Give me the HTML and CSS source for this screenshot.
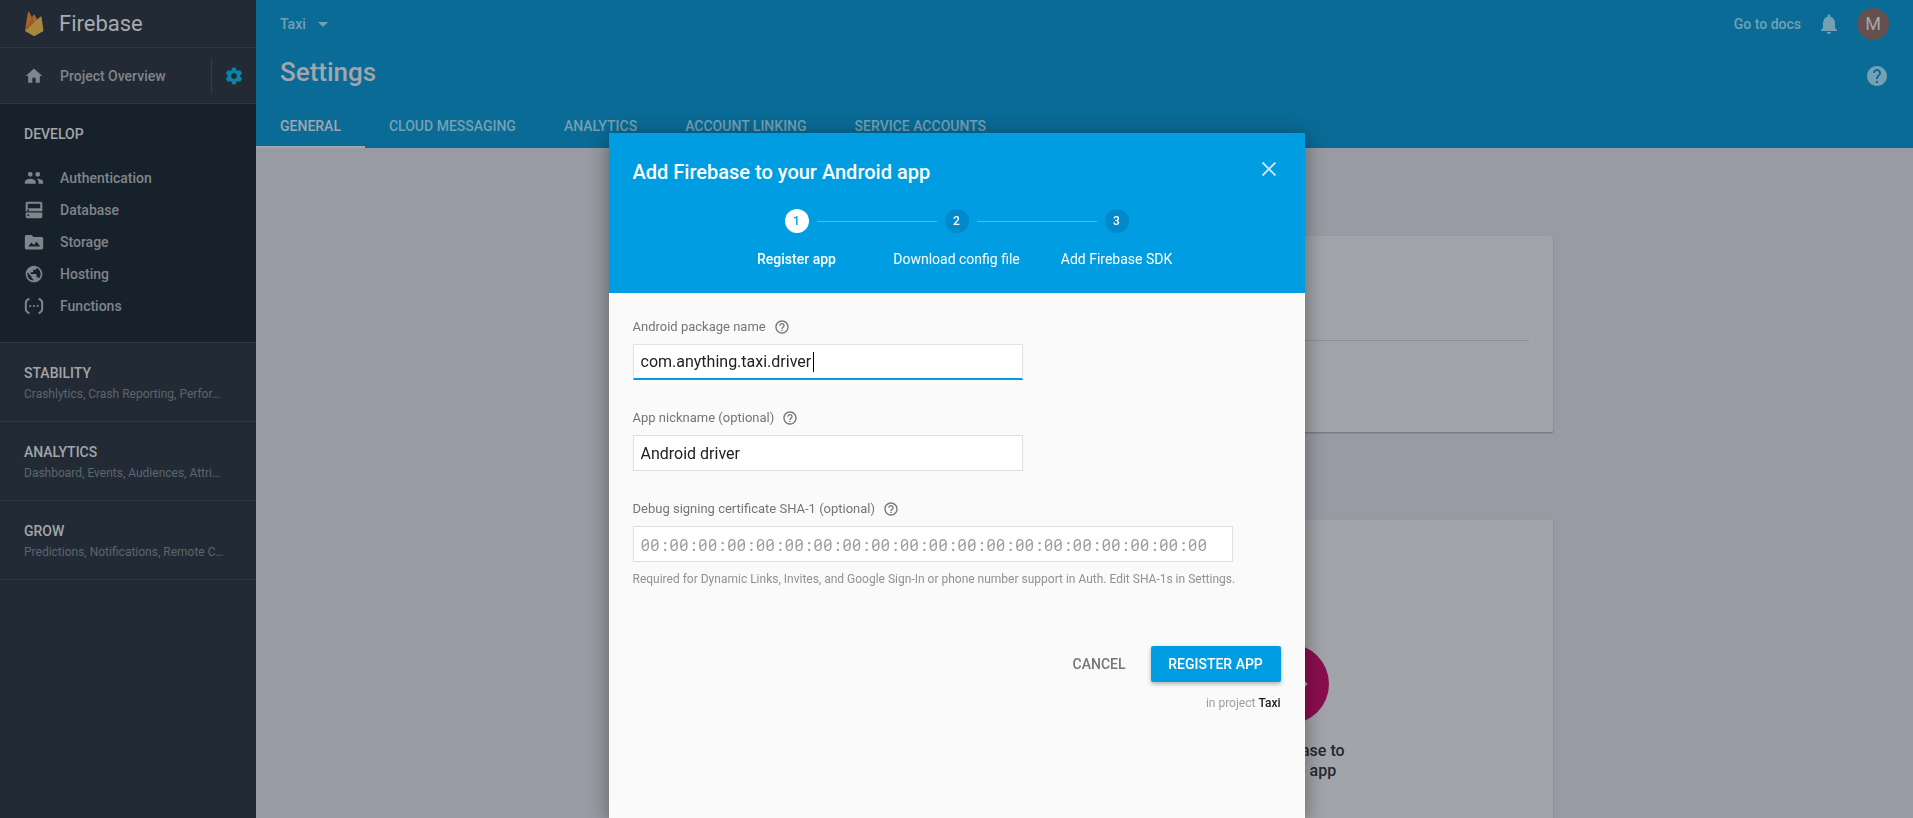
FILE: index.html
```html
<!DOCTYPE html>
<html lang="en">
<head>
<meta charset="utf-8">
<title>Settings – Taxi – Firebase console</title>
<link rel="stylesheet" href="styles.css">
</head>
<body>
<div class="console">
  <nav class="sidebar" aria-label="Console">
    <a class="brand" href="#">
      <svg class="brand-logo" width="20" height="28" viewBox="0 0 20 28" aria-hidden="true">
        <path fill="#a8672a" d="M1 21 4 2Q4.400 1 5.200 2L8 7.500 9.600 4.800Q10.200 4 10.800 5L19 21Z"/>
        <path fill="#9d5529" d="M1 21 8.100 7.500 11 12.600Z"/>
        <path fill="#a8873f" d="M1 21 16.500 6.600Q17.300 6 17.500 7L19.500 21 11.200 25.800Q10.200 26.300 9.200 25.800Z"/>
      </svg>
      <span class="brand-name">Firebase</span>
    </a>
    <div class="overview">
      <a class="nav-item overview-link" href="#">
        <svg class="icon" viewBox="0 0 24 24" aria-hidden="true"><path d="M10 20v-6h4v6h5v-8h3L12 3 2 12h3v8z"/></svg>
        <span>Project Overview</span>
      </a>
      <button class="gear" type="button" aria-label="Project settings">
        <svg class="icon" viewBox="0 0 24 24" aria-hidden="true"><path d="M19.430 12.980c.04-.32.07-.64.07-.98s-.03-.66-.07-.98l2.110-1.650c.19-.15.24-.42.12-.64l-2-3.460c-.12-.22-.39-.3-.61-.22l-2.490 1c-.52-.4-1.080-.73-1.690-.98l-.38-2.650C14.460 2.180 14.250 2 14 2h-4c-.25 0-.46.18-.49.42l-.38 2.650c-.61.25-1.170.59-1.690.98l-2.490-1c-.23-.09-.49 0-.61.22l-2 3.460c-.13.22-.07.49.12.64l2.110 1.650c-.04.32-.07.65-.07.98s.03.66.07.98l-2.110 1.650c-.19.15-.24.42-.12.64l2 3.460c.12.22.39.3.61.22l2.490-1c.52.4 1.080.73 1.690.98l.38 2.650c.03.24.24.42.49.42h4c.25 0 .46-.18.49-.42l.38-2.650c.61-.25 1.170-.59 1.690-.98l2.490 1c.23.09.49 0 .61-.22l2-3.460c.12-.22.07-.49-.12-.64l-2.110-1.650zM12 15.500c-1.930 0-3.500-1.570-3.500-3.500s1.570-3.500 3.500-3.500 3.500 1.570 3.500 3.500-1.570 3.500-3.500 3.500z"/></svg>
      </button>
    </div>
    <section class="develop">
      <h2 class="group-title">DEVELOP</h2>
      <ul class="nav-list">
        <li><a class="nav-item" href="#"><svg class="icon" viewBox="0 0 24 24" aria-hidden="true"><path d="M16.500 10.500a2.900 2.900 0 1 0 0-5.800 2.900 2.900 0 0 0 0 5.800zM7.500 10.500a2.900 2.900 0 1 0 0-5.800 2.900 2.900 0 0 0 0 5.800zM7.500 13C5.200 13 1 14.200 1 16.500V19h13v-2.500C14 14.200 9.800 13 7.500 13zM16.500 13c-.3 0-.6 0-1 .1 1.200.8 2 2 2 3.400V19H23v-2.500c0-2.300-4.200-3.500-6.500-3.500z"/></svg><span>Authentication</span></a></li>
        <li><a class="nav-item" href="#"><svg class="icon" viewBox="0 0 24 24" aria-hidden="true"><path fill-rule="evenodd" d="M4 2h16a2 2 0 0 1 2 2v9.500H2V4a2 2 0 0 1 2-2zm.5 2.500V10h15V4.500zM5 10.800a1.100 1.100 0 1 0 0 2.200 1.100 1.100 0 0 0 0-2.200zM2 15h20v5a2 2 0 0 1-2 2H4a2 2 0 0 1-2-2zm3 2.200a1.200 1.200 0 1 0 0 2.400 1.200 1.200 0 0 0 0-2.400z"/></svg><span>Database</span></a></li>
        <li><a class="nav-item" href="#"><svg class="icon" viewBox="0 0 24 24" aria-hidden="true"><path fill-rule="evenodd" d="M3 3.500h6l2.500 2.500H21a2 2 0 0 1 2 2v11a2 2 0 0 1-2 2H3a2 2 0 0 1-2-2v-13.500a2 2 0 0 1 2-2zM5 17.500h14.500L15 11.500l-3 4-3-3z"/></svg><span>Storage</span></a></li>
        <li><a class="nav-item" href="#"><svg class="icon" viewBox="0 0 24 24" aria-hidden="true"><path d="M12 2C6.480 2 2 6.480 2 12s4.480 10 10 10 10-4.480 10-10S17.520 2 12 2zm-1 17.930c-3.950-.49-7-3.850-7-7.930 0-.62.08-1.210.21-1.790L9 15v1c0 1.100.9 2 2 2v1.930zm6.900-2.540c-.26-.81-1-1.390-1.900-1.390h-1v-3c0-.55-.45-1-1-1H8v-2h2c.55 0 1-.45 1-1V7h2c1.100 0 2-.9 2-2v-.41c2.930 1.190 5 4.060 5 7.410 0 2.080-.8 3.970-2.100 5.390z"/></svg><span>Hosting</span></a></li>
        <li><a class="nav-item" href="#"><svg class="icon" viewBox="0 0 24 24" aria-hidden="true"><path class="stroke" d="M6.500 3.200Q2.200 5 2.200 8v8q0 3 4.300 4.800M17.500 3.200Q21.800 5 21.800 8v8q0 3-4.300 4.800"/><circle cx="7.500" cy="12" r="1.300"/><circle cx="12" cy="12" r="1.300"/><circle cx="16.500" cy="12" r="1.300"/></svg><span>Functions</span></a></li>
      </ul>
    </section>
    <section class="group">
      <h2 class="group-title">STABILITY</h2>
      <p class="group-text">Crashlytics, Crash Reporting, Perfor…</p>
    </section>
    <section class="group">
      <h2 class="group-title">ANALYTICS</h2>
      <p class="group-text">Dashboard, Events, Audiences, Attri…</p>
    </section>
    <section class="group">
      <h2 class="group-title">GROW</h2>
      <p class="group-text">Predictions, Notifications, Remote C…</p>
    </section>
  </nav>

  <main class="main">
    <header class="header">
      <div class="topbar">
        <button class="project" type="button">Taxi
          <svg width="10" height="5" viewBox="0 0 10 5" aria-hidden="true"><path fill="currentColor" d="M0 0h10L5 5z"/></svg>
        </button>
        <div class="tools">
          <a class="docs" href="#">Go to docs</a>
          <button class="bell" type="button" aria-label="Notifications">
            <svg width="24" height="24" viewBox="0 0 24 24" aria-hidden="true"><path fill="currentColor" d="M12 22c1.100 0 2-.9 2-2h-4c0 1.100.89 2 2 2zm6-6v-5c0-3.070-1.640-5.640-4.500-6.320V4c0-.83-.67-1.500-1.500-1.500s-1.500.67-1.500 1.500v.68C7.630 5.360 6 7.920 6 11v5l-2 2v1h16v-1l-2-2z"/></svg>
          </button>
          <button class="avatar" type="button">M</button>
        </div>
      </div>
      <div class="titlebar">
        <h1 class="page-title">Settings</h1>
        <button class="help" type="button" aria-label="Help">
          <svg width="24" height="24" viewBox="0 0 24 24" aria-hidden="true"><path fill="currentColor" d="M12 2C6.480 2 2 6.480 2 12s4.480 10 10 10 10-4.480 10-10S17.520 2 12 2zm1 17h-2v-2h2v2zm2.070-7.750l-.9.920C13.450 12.900 13 13.500 13 15h-2v-.5c0-1.100.45-2.100 1.170-2.830l1.240-1.260c.37-.36.59-.86.59-1.410 0-1.100-.9-2-2-2s-2 .9-2 2H8c0-2.210 1.790-4 4-4s4 1.790 4 4c0 .88-.36 1.680-.93 2.250z"/></svg>
        </button>
      </div>
      <nav class="tabs" aria-label="Settings sections">
        <a class="tab tab-active" href="#">GENERAL</a>
        <a class="tab" href="#">CLOUD MESSAGING</a>
        <a class="tab" href="#">ANALYTICS</a>
        <a class="tab" href="#">ACCOUNT LINKING</a>
        <a class="tab" href="#">SERVICE ACCOUNTS</a>
      </nav>
    </header>
    <div class="content">
      <section class="card project-card"><hr class="rule"></section>
      <section class="card apps-card">
        <a class="platform" href="#">
          <svg class="platform-icon" viewBox="0 0 80 80" aria-hidden="true"><circle cx="40" cy="40" r="40" fill="#8a0e4f"/><path fill="none" stroke="#a1a4a8" stroke-width="4" d="m32 32-8 8 8 8M48 32l8 8-8 8" transform="translate(-38 0) translate(38 0)"/></svg>
          <span>Add Firebase to your web app</span>
        </a>
      </section>
    </div>
  </main>
</div>

<div class="overlay">
  <div class="dialog" role="dialog" aria-modal="true" aria-labelledby="dialog-title">
    <header class="dialog-header">
      <div class="dialog-top">
        <h2 class="dialog-title" id="dialog-title">Add Firebase to your Android app</h2>
        <button class="close" type="button" aria-label="Close">
          <svg width="24" height="24" viewBox="0 0 24 24" aria-hidden="true"><path fill="none" stroke="currentColor" stroke-width="1.800" d="m5.500 5.500 13 13m0-13-13 13"/></svg>
        </button>
      </div>
      <ol class="steps">
        <li class="step step-active"><span class="step-number">1</span><span class="step-label">Register app</span></li>
        <li class="step"><span class="step-number">2</span><span class="step-label">Download config file</span></li>
        <li class="step"><span class="step-number">3</span><span class="step-label">Add Firebase SDK</span></li>
      </ol>
    </header>
    <form class="form">
      <div class="field">
        <div class="label-row">
          <label for="package">Android package name</label>
          <svg class="hint" viewBox="0 0 24 24" aria-hidden="true"><path d="M11 18h2v-2h-2v2zm1-16C6.480 2 2 6.480 2 12s4.480 10 10 10 10-4.480 10-10S17.520 2 12 2zm0 18c-4.410 0-8-3.590-8-8s3.590-8 8-8 8 3.590 8 8-3.590 8-8 8zm0-14c-2.210 0-4 1.790-4 4h2c0-1.100.9-2 2-2s2 .9 2 2c0 2-3 1.750-3 5h2c0-2.250 3-2.500 3-5 0-2.210-1.790-4-4-4z"/></svg>
        </div>
        <div class="input-wrap">
          <input class="input input-focused" id="package" type="text" value="com.anything.taxi.driver">
          <span class="caret" aria-hidden="true"></span>
        </div>
      </div>
      <div class="field">
        <div class="label-row">
          <label for="nickname">App nickname (optional)</label>
          <svg class="hint" viewBox="0 0 24 24" aria-hidden="true"><path d="M11 18h2v-2h-2v2zm1-16C6.480 2 2 6.480 2 12s4.480 10 10 10 10-4.480 10-10S17.520 2 12 2zm0 18c-4.410 0-8-3.590-8-8s3.590-8 8-8 8 3.590 8 8-3.590 8-8 8zm0-14c-2.210 0-4 1.790-4 4h2c0-1.100.9-2 2-2s2 .9 2 2c0 2-3 1.750-3 5h2c0-2.250 3-2.500 3-5 0-2.210-1.790-4-4-4z"/></svg>
        </div>
        <div class="input-wrap">
          <input class="input" id="nickname" type="text" value="Android driver">
        </div>
      </div>
      <div class="field">
        <div class="label-row">
          <label for="sha">Debug signing certificate SHA-1 (optional)</label>
          <svg class="hint" viewBox="0 0 24 24" aria-hidden="true"><path d="M11 18h2v-2h-2v2zm1-16C6.480 2 2 6.480 2 12s4.480 10 10 10 10-4.480 10-10S17.520 2 12 2zm0 18c-4.410 0-8-3.590-8-8s3.590-8 8-8 8 3.590 8 8-3.590 8-8 8zm0-14c-2.210 0-4 1.790-4 4h2c0-1.100.9-2 2-2s2 .9 2 2c0 2-3 1.750-3 5h2c0-2.250 3-2.500 3-5 0-2.210-1.790-4-4-4z"/></svg>
        </div>
        <div class="input-wrap input-wide">
          <input class="input input-mono" id="sha" type="text" placeholder="00:00:00:00:00:00:00:00:00:00:00:00:00:00:00:00:00:00:00:00" aria-describedby="sha-help">
        </div>
        <p class="help-text" id="sha-help">Required for Dynamic Links, Invites, and Google Sign-In or phone number support in Auth. Edit SHA-1s in Settings.</p>
      </div>
      <div class="actions">
        <button class="button" type="button">CANCEL</button>
        <button class="button button-primary" type="submit">REGISTER APP</button>
      </div>
      <p class="in-project">in project <strong>Taxi</strong></p>
    </form>
  </div>
</div>
</body>
</html>
```
FILE: styles.css
```css
* { box-sizing: border-box; }

html, body { height: 100%; }

body {
  margin: 0;
  overflow: hidden;
  background: #989ba3;
  font: 400 14px/20px Roboto, "Liberation Sans", sans-serif;
}

h1, h2, p, ul, ol { margin: 0; padding: 0; }
ul, ol { list-style: none; }
a { color: inherit; text-decoration: none; }
button {
  padding: 0;
  border: 0;
  background: none;
  color: inherit;
  font: inherit;
  cursor: pointer;
}
svg { display: block; flex: none; }

.console { display: flex; height: 100%; overflow: hidden; }

/* Sidebar */
.sidebar {
  flex: none;
  width: 256px;
  background: #222b35;
  color: #80858b;
  font-weight: 500;
}
.brand {
  display: flex;
  align-items: center;
  gap: 15px;
  height: 48px;
  padding-left: 24px;
  border-bottom: 1px solid #2f3842;
}
.brand-name { color: #a7aaae; font-size: 22px; font-weight: 400; }
.overview {
  display: flex;
  align-items: center;
  height: 56px;
  border-bottom: 1px solid #2f3842;
}
.overview-link { flex: 1; }
.gear {
  display: flex;
  align-items: center;
  justify-content: center;
  width: 45px;
  height: 36px;
  border-left: 1px solid #333c46;
  color: #0a84a8;
}
.icon { width: 20px; height: 20px; fill: currentColor; }
.icon .stroke { fill: none; stroke: currentColor; stroke-width: 2.400; }
.nav-item {
  display: flex;
  align-items: center;
  gap: 16px;
  height: 32px;
  padding-left: 24px;
}
.develop {
  padding: 20px 0;
  border-bottom: 1px solid #2f3842;
  background: #17212b;
}
.nav-list { margin-top: 18px; }
.develop .group-title { padding-left: 24px; }
.group-title { color: #a2a6aa; font-size: 14px; line-height: 20px; font-weight: 500; }
.group {
  padding: 20px 24px 16px;
  border-bottom: 1px solid #2f3842;
}
.group-text {
  overflow: hidden;
  color: #5d656d;
  font-size: 12px;
  line-height: 22px;
  font-weight: 400;
  white-space: nowrap;
  text-overflow: ellipsis;
}

/* Header */
.main { flex: 1; min-width: 0; }
.header { background: #096b96; color: #75a0b3; font-weight: 500; }
.topbar {
  display: flex;
  align-items: center;
  justify-content: space-between;
  height: 48px;
  padding: 0 24px;
}
.project { display: flex; align-items: center; gap: 12px; }
.tools { display: flex; align-items: center; gap: 16px; }
.avatar {
  width: 32px;
  height: 32px;
  border-radius: 50%;
  background: #66504f;
  color: #a9a5a6;
  font-size: 18px;
  font-weight: 400;
}
.titlebar {
  display: flex;
  align-items: flex-start;
  justify-content: space-between;
  height: 56px;
  padding: 8px 24px;
}
.help { padding-top: 8px; }
.page-title { color: #a2a6ac; font-size: 26px; line-height: 32px; font-weight: 500; }
.tabs { display: flex; height: 44px; }
.tab { padding: 12px 24px; line-height: 20px; }
.tab-active { border-bottom: 2px solid #a2a6ac; color: #a2a6ac; }

/* Cards */
.content {
  max-width: 984px;
  margin: 0 auto;
  padding: 88px 24px 0;
}
.card {
  border-radius: 2px;
  background: #a1a4a8;
  box-shadow: 0 1px 2px #6c7076;
}
.project-card { height: 196px; padding: 104px 24px 0; }
.rule { margin: 0; border: 0; border-top: 1px solid #8b8f95; }
.apps-card {
  display: grid;
  grid-template-columns: repeat(3, 204px);
  justify-content: center;
  margin-top: 88px;
  padding: 124px 24px 80px;
}
.platform {
  display: flex;
  grid-column: 3;
  flex-direction: column;
  align-items: center;
  gap: 17px;
  padding: 0 40px;
  color: #24292f;
  font-size: 16px;
  font-weight: 500;
  text-align: center;
}
.platform-icon { width: 80px; height: 80px; }

/* Dialog */
.overlay {
  position: fixed;
  inset: 0;
  display: flex;
  justify-content: center;
  padding-top: 133px;
}
.dialog {
  width: 696px;
  max-width: 100%;
  background: #fafafa;
  box-shadow: 0 4px 20px rgba(0, 0, 0, .4);
}
.dialog-header {
  height: 160px;
  padding: 24px;
  background: #009de2;
  color: #fff;
}
.dialog-top { display: flex; align-items: flex-start; justify-content: space-between; }
.dialog-title { font-size: 20px; line-height: 30px; font-weight: 500; }
.close { color: #c4e8f8; }
.steps { display: flex; justify-content: center; margin-top: 22px; }
.step {
  display: grid;
  grid-template-columns: 1fr 24px 1fr;
  align-items: center;
  justify-items: center;
  column-gap: 8px;
  row-gap: 16px;
  width: 160px;
}
.step::before, .step::after {
  content: "";
  grid-row: 1;
  width: 100%;
  height: 1px;
}
.step::before { grid-column: 1; }
.step::after { grid-column: 3; }
.step:not(:first-child)::before, .step:not(:last-child)::after { background: #4dbaeb; }
.step-number {
  grid-row: 1;
  grid-column: 2;
  width: 24px;
  border-radius: 50%;
  background: #0289cc;
  font-size: 12px;
  line-height: 24px;
  font-weight: 500;
  text-align: center;
}
.step-label { grid-row: 2; grid-column: 1 / -1; white-space: nowrap; }
.step-active .step-number { background: #fff; color: #009de2; }
.step-active .step-label { font-weight: 500; }

.form { padding: 24px; }
.field { margin-bottom: 28px; }
.label-row {
  display: flex;
  align-items: center;
  gap: 8px;
  margin-bottom: 7px;
  color: #757575;
  font-size: 13px;
}
.hint { width: 16px; height: 16px; fill: #757575; }
.input-wrap { position: relative; max-width: 390px; }
.input-wide { max-width: 600px; }
.input {
  display: block;
  width: 100%;
  height: 36px;
  padding: 0 7px;
  border: 1px solid #e0e0e0;
  border-radius: 0;
  outline: 0;
  background: #fff;
  color: #212121;
  font: 400 16px/20px Roboto, "Liberation Sans", sans-serif;
}
.input-focused { border-bottom: 2px solid #009de2; }
.input-mono { font-family: "Roboto Mono", "Liberation Mono", monospace; }
.input-mono::placeholder { color: #9e9e9e; opacity: 1; }
.caret {
  position: absolute;
  top: 8px;
  left: 180px;
  width: 1px;
  height: 20px;
  background: #000;
}
.help-text { margin-top: 7px; color: #919191; font-size: 12px; }
.actions { display: flex; justify-content: flex-end; gap: 8px; margin-top: 57px; }
.button {
  height: 36px;
  padding: 0 17px;
  border-radius: 2px;
  color: #757575;
  font-weight: 500;
}
.button-primary {
  min-width: 130px;
  background: #009de2;
  box-shadow: 0 2px 4px rgba(0, 0, 0, .3);
  color: #fff;
}
.in-project { margin-top: 11px; color: #9e9e9e; font-size: 12px; text-align: right; }
.in-project strong { color: #212121; font-weight: 500; }
```
